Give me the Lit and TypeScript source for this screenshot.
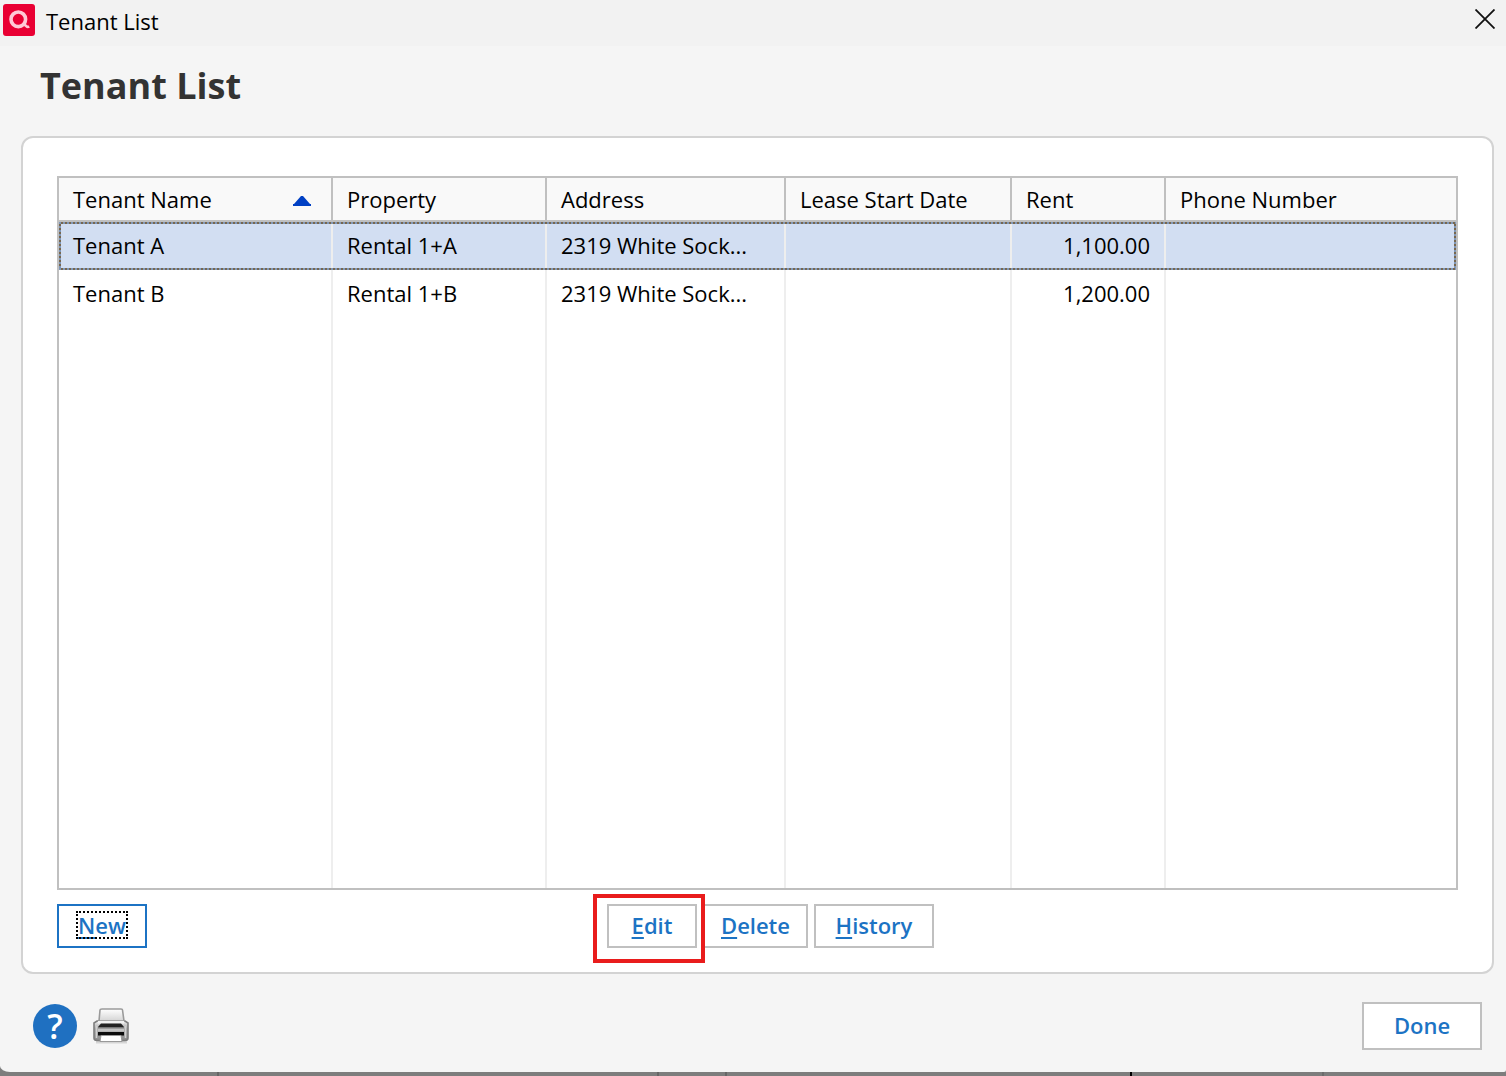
import { LitElement, html, css, svg } from "lit";
import { customElement, property, state } from "lit/decorators.js";
import { classMap } from "lit/directives/class-map.js";

interface Tenant {
  name: string;
  property: string;
  address: string;
  leaseStart: string;
  rent: string;
  phone: string;
}

const TENANTS: Tenant[] = [
  { name: "Tenant A", property: "Rental 1+A", address: "2319 White Sock...", leaseStart: "", rent: "1,100.00", phone: "" },
  { name: "Tenant B", property: "Rental 1+B", address: "2319 White Sock...", leaseStart: "", rent: "1,200.00", phone: "" },
];

@customElement("title-bar")
export class TitleBar extends LitElement {
  @property() label = "";

  static styles = css`
    :host {
      display: flex;
      align-items: flex-start;
      height: 46px;
      box-sizing: border-box;
      padding: 4px 8px 0 3px;
      background: #f2f2f2;
      color: #000;
    }
    .logo {
      display: block;
      width: 32px;
      height: 32px;
    }
    .label {
      flex: 1;
      padding: 2px 0 0 11px;
      font-size: 22px;
      line-height: 30px;
    }
    .close {
      display: grid;
      place-items: center;
      width: 26px;
      height: 30px;
      padding: 0;
      border: 0;
      background: none;
      color: #111;
    }
  `;

  render() {
    return html`
      <svg class="logo" viewBox="0 0 32 32" aria-hidden="true">
        <rect width="32" height="32" rx="3" fill="#e90033" />
        <circle cx="15.3" cy="15.300" r="7.300" fill="none" stroke="#ffc9d6" stroke-width="3.600" />
        <path d="M16 22.600L20 20.500Q22.500 20.800 23.500 22.300Q24.500 23.400 26.300 22.600" fill="none" stroke="#ffc9d6" stroke-width="2.600" />
      </svg>
      <span class="label">${this.label}</span>
      <button class="close" aria-label="Close">
        <svg width="20" height="20" viewBox="0 0 20 20" aria-hidden="true">
          <path d="M0.500 0.500L19.500 19.500M19.500 0.500L0.500 19.500" stroke="currentColor" stroke-width="1.800" />
        </svg>
      </button>
    `;
  }
}

@customElement("tenant-table")
export class TenantTable extends LitElement {
  @state() private selected = 0;

  static styles = css`
    :host {
      display: flex;
      border: 2px solid #c0c0c0;
      background: #fff;
    }
    .grid {
      width: 100%;
      table-layout: fixed;
      border-collapse: separate;
      border-spacing: 0;
      font-size: 22px;
      line-height: 30px;
      color: #000;
    }
    .name { width: 274px; }
    .prop { width: 214px; }
    .addr { width: 239px; }
    .lease { width: 226px; }
    .rent { width: 154px; }
    th,
    td {
      box-sizing: border-box;
      padding: 0 14px 2px;
      border-right: 2px solid #eee;
      text-align: left;
      font-weight: 400;
      white-space: nowrap;
    }
    th {
      height: 44px;
      padding-bottom: 0;
      background: #f9f9f9;
      border-right-color: #c0c0c0;
      border-bottom: 2px solid #c0c0c0;
    }
    th:last-child,
    td:last-child {
      border-right: 0;
    }
    .head {
      display: flex;
      align-items: center;
      justify-content: space-between;
    }
    .arrow {
      display: block;
      margin: 4px 6px 0 0;
    }
    .row {
      height: 48px;
      position: relative;
    }
    .amount {
      text-align: right;
    }
    .selected {
      background: #d2def2;
    }
    .selected td:first-child::after {
      content: "";
      position: absolute;
      inset: 0;
      pointer-events: none;
      background:
        repeating-linear-gradient(90deg, #8097b8 0 2px, #77674f 2px 4px) top / 100% 2px no-repeat,
        repeating-linear-gradient(90deg, #8097b8 0 2px, #77674f 2px 4px) bottom / 100% 2px no-repeat,
        repeating-linear-gradient(#8097b8 0 2px, #77674f 2px 4px) left / 2px 100% no-repeat,
        repeating-linear-gradient(#8097b8 0 2px, #77674f 2px 4px) right / 2px 100% no-repeat;
    }
  `;

  render() {
    return html`
      <table class="grid">
        <colgroup>
          <col class="name" /><col class="prop" /><col class="addr" />
          <col class="lease" /><col class="rent" /><col />
        </colgroup>
        <thead>
          <tr>
            <th scope="col" aria-sort="ascending">
              <span class="head">
                Tenant Name
                <svg class="arrow" width="18" height="10" viewBox="0 0 18 10" aria-hidden="true">
                  <path d="M8 0H10L17 8H18V10H0V8H1Z" fill="#0040c4" />
                </svg>
              </span>
            </th>
            <th scope="col">Property</th>
            <th scope="col">Address</th>
            <th scope="col">Lease Start Date</th>
            <th scope="col">Rent</th>
            <th scope="col">Phone Number</th>
          </tr>
        </thead>
        <tbody>
          ${TENANTS.map(
            (t, i) => html`
              <tr class=${classMap({ row: true, selected: i === this.selected })} @click=${() => (this.selected = i)}>
                <td>${t.name}</td>
                <td>${t.property}</td>
                <td>${t.address}</td>
                <td>${t.leaseStart}</td>
                <td class="amount">${t.rent}</td>
                <td>${t.phone}</td>
              </tr>
            `
          )}
          <tr aria-hidden="true"><td></td><td></td><td></td><td></td><td></td><td></td></tr>
        </tbody>
      </table>
    `;
  }
}

const printerIcon = svg`
  <defs>
    <linearGradient id="paper" x1="0" y1="0" x2="0" y2="1">
      <stop offset="0" stop-color="#fff" /><stop offset="1" stop-color="#d4d4d4" />
    </linearGradient>
    <linearGradient id="case" x1="0" y1="0" x2="0" y2="1">
      <stop offset="0" stop-color="#f0f0f0" /><stop offset="0.400" stop-color="#a8a8a8" /><stop offset="1" stop-color="#8c8c8c" />
    </linearGradient>
  </defs>
  <path d="M3 34H34" stroke="#d5d5d5" stroke-width="3" />
  <path d="M4 13H32L35 15V30Q35 32.500 32 32.500H4Q1 32.500 1 30V15Z" fill="url(#case)" stroke="#7d7d7d" stroke-width="1.600" />
  <path d="M6 13L7 2Q7 1 9 1H28Q29.500 1 29.500 2L31 13Z" fill="url(#paper)" stroke="#9a9a9a" stroke-width="1.600" />
  <path d="M5 13H31V15.500H5Z" fill="#f2f2f2" />
  <path d="M8 15.500H28L31 19H5Z" fill="#222" />
  <path d="M5 19.500H31V23.500H5Z" fill="#c4c4c4" />
  <path d="M5 19H31V20.500H5Z" fill="#777" />
  <path d="M5 24H31V27.500H5Z" fill="#0c0c0c" />
  <path d="M8 27.500H28L29 33.500H7Z" fill="#fff" stroke="#999" stroke-width="1" />
  <path d="M3.500 18V30M32.500 18V30" stroke="#d0d0d0" stroke-width="1.500" />
`;

@customElement("app-root")
export class AppRoot extends LitElement {
  static styles = css`
    :host {
      display: flex;
      flex-direction: column;
      box-sizing: border-box;
      min-height: 100vh;
      padding-bottom: 4px;
      background:
        linear-gradient(#666, #666) 217px 100% / 2px 4px no-repeat,
        linear-gradient(#666, #666) 657px 100% / 2px 4px no-repeat,
        linear-gradient(#666, #666) 725px 100% / 2px 4px no-repeat,
        linear-gradient(#000, #000) 1130px 100% / 2px 4px no-repeat,
        linear-gradient(#6c6c6c, #6c6c6c) 1322px 100% / 2px 4px no-repeat,
        #7d7d7d;
      font-family: "Open Sans", "Noto Sans", sans-serif;
    }
    .window {
      flex: 1;
      display: flex;
      flex-direction: column;
      background: #f5f5f5;
      border-radius: 0 0 2px 10px / 0 0 2px 6px;
    }
    .heading {
      margin: 0;
      padding: 16px 40px 26px;
      font-size: 36px;
      line-height: 48px;
      font-weight: 700;
      color: #333;
    }
    .panel {
      flex: 1;
      display: flex;
      flex-direction: column;
      gap: 14px;
      margin: 0 12px 0 21px;
      padding: 38px 34px 24px;
      border: 2px solid #d3d3d3;
      border-radius: 12px;
      background: #fff;
    }
    .table {
      flex: 1;
    }
    .actions {
      display: grid;
      grid-template-columns: 1fr auto 1fr;
    }
    .group {
      display: flex;
      gap: 6px;
      margin-left: 26px;
    }
    .button {
      box-sizing: border-box;
      min-width: 90px;
      height: 44px;
      padding: 0 16px 2px;
      border: 2px solid #c0c0c0;
      background: #fff;
      color: #1c73c4;
      font-family: inherit;
      font-size: 22px;
      line-height: 28px;
      font-weight: 600;
    }
    .default {
      justify-self: start;
      border-color: #1c73c4;
    }
    .default .caption {
      outline: 2px dotted #000;
      outline-offset: -1px;
    }
    .caption {
      display: inline-block;
      padding: 0 1px;
      line-height: 26px;
    }
    .wide {
      min-width: 120px;
    }
    .done {
      height: 48px;
    }
    .key {
      text-decoration: underline 2px;
      text-underline-offset: 3px;
    }
    .marked {
      position: relative;
    }
    .marked::after {
      content: "";
      position: absolute;
      inset: -10px -8px -15px -14px;
      border: 4px solid #e91c1c;
      pointer-events: none;
    }
    .footer {
      display: flex;
      align-items: center;
      gap: 16px;
      padding: 28px 24px 22px 33px;
    }
    .help {
      width: 44px;
      height: 44px;
      padding: 0;
      border: 0;
      border-radius: 50%;
      background: #1f70c1;
      color: #fff;
      font-family: inherit;
      font-size: 34px;
      line-height: 44px;
      font-weight: 600;
    }
    .print {
      display: grid;
      margin-right: auto;
      padding: 0;
      border: 0;
      background: none;
    }
  `;

  render() {
    return html`
      <main class="window">
        <title-bar label="Tenant List"></title-bar>
        <h1 class="heading">Tenant List</h1>
        <section class="panel">
          <tenant-table class="table"></tenant-table>
          <div class="actions">
            <button class="button default"><span class="caption"><span class="key">N</span>ew</span></button>
            <div class="group">
              <div class="marked"><button class="button"><span class="key">E</span>dit</button></div>
              <button class="button"><span class="key">D</span>elete</button>
              <button class="button wide"><span class="key">H</span>istory</button>
            </div>
          </div>
        </section>
        <footer class="footer">
          <button class="help" aria-label="Help">?</button>
          <button class="print" aria-label="Print">
            <svg width="36" height="36" viewBox="0 0 36 36" aria-hidden="true">${printerIcon}</svg>
          </button>
          <button class="button wide done">Done</button>
        </footer>
      </main>
    `;
  }
}
